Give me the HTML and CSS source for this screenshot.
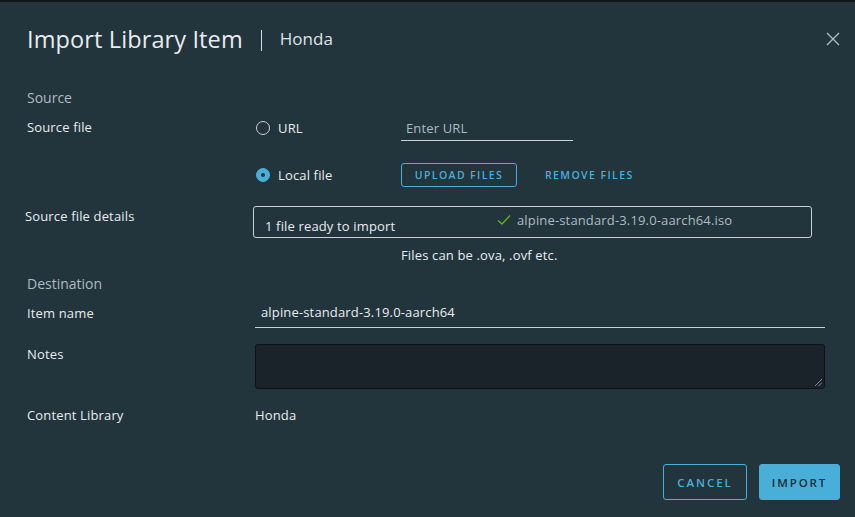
FILE: index.html
```html
<!DOCTYPE html>
<html>
<head>
<meta charset="utf-8">
<link rel="stylesheet" href="styles.css">
</head>
<body>
<div class="topstrip"></div>
<div class="dialog">
  <div class="header">
    <h1 class="title">Import Library Item</h1>
    <span class="sep"></span>
    <span class="subtitle">Honda</span>
    <svg class="close" width="14" height="14" viewBox="0 0 14 14"><path d="M1 1 L13 13 M13 1 L1 13" stroke="#adbbc4" stroke-width="1.4" fill="none"/></svg>
  </div>
  <div class="body">
    <div class="section">Source</div>
    <div class="row r-source">
      <div class="label">Source file</div>
      <div class="opts">
        <div class="opt">
          <label class="radio"><span class="circle"></span>URL</label>
          <div class="url">Enter URL</div>
        </div>
        <div class="opt opt2">
          <label class="radio"><span class="circle on"></span>Local file</label>
          <button class="btn-outline-sm">UPLOAD FILES</button>
          <button class="btn-link">REMOVE FILES</button>
        </div>
      </div>
    </div>
    <div class="row r-details">
      <div class="label l-details">Source file details</div>
      <div>
        <div class="filebox">
          <span class="ready">1 file ready to import</span>
          <span class="fname"><svg width="14" height="12" viewBox="0 0 14 12"><path d="M1 6.5 L5 10 L13 1.5" stroke="#5eb715" stroke-width="1.3" fill="none"/></svg>alpine-standard-3.19.0-aarch64.iso</span>
        </div>
        <div class="hint">Files can be .ova, .ovf etc.</div>
      </div>
    </div>
    <div class="section s-dest">Destination</div>
    <div class="row r-item">
      <div class="label">Item name</div>
      <div class="itemin">alpine-standard-3.19.0-aarch64</div>
    </div>
    <div class="row r-notes">
      <div class="label">Notes</div>
      <div class="notes"><svg class="grip" width="7" height="7" viewBox="0 0 7 7"><path d="M0 7 L7 0 M3.5 7 L7 3.5" stroke="#8a9aa3" stroke-width="0.9"/></svg></div>
    </div>
    <div class="row r-lib">
      <div class="label">Content Library</div>
      <div class="val">Honda</div>
    </div>
  </div>
  <div class="footer">
    <button class="btn-outline">CANCEL</button>
    <button class="btn-primary">IMPORT</button>
  </div>
</div>
</body>
</html>
```
FILE: styles.css
```css
* { box-sizing: border-box; }
html, body { margin: 0; padding: 0; }
body {
  width: 855px; height: 517px; overflow: hidden;
  background: #22343c;
  font-family: "Open Sans", "Noto Sans", sans-serif;
  color: #e9ecef;
}
.topstrip { height: 2px; background: #11181c; }
.dialog { position: relative; height: 515px; }
.header {
  display: flex; align-items: center;
  padding: 22px 15px 0 27px; height: 52px;
}
.title {
  margin: 0; font-weight: 400; font-size: 23.5px; color: #e9ecef;
  letter-spacing: 0.12px; line-height: 30px;
}
.sep { width: 1px; height: 21px; background: #d8dde0; margin: 2px 18px 0 18px; }
.subtitle { font-size: 17px; color: #dfe4e7; line-height: 30px; }
.close { margin-left: auto; margin-top: 0; }
.body { padding: 34px 30px 0 27px; }
.section { font-size: 14px; color: #adbbc4; line-height: 20px; }
.row { display: grid; grid-template-columns: 228px 1fr; font-size: 13px; letter-spacing: 0.15px; }
.label { color: #e9ecef; line-height: 18px; }
.r-source { margin-top: 10px; }
.opts { display: flex; flex-direction: column; }
.opt { display: flex; align-items: center; height: 20px; }
.opt2 { margin-top: 25px; height: 24px; }
.radio { display: flex; align-items: center; width: 146px; color: #e9ecef; }
.circle {
  width: 14px; height: 14px; border-radius: 50%; border: 1px solid #c9d1d5;
  margin: 0 8px 0 1px; display: inline-block; position: relative;
}
.circle.on { background: #49afd9; border-color: #49afd9; }
.circle.on::after {
  content: ""; position: absolute; left: 4px; top: 4px; width: 4px; height: 4px;
  border-radius: 50%; background: #22343c;
}
.url {
  width: 172px; color: #adbbc4; padding: 0 5px; line-height: 14px;
  border-bottom: 1px solid #c9d1d5; margin-top: 5px; height: 20px;
}
.btn-outline-sm {
  font-family: inherit; background: transparent; border: 1px solid #49afd9;
  color: #49afd9; border-radius: 3px; font-size: 10.5px; letter-spacing: 1.4px;
  height: 24px; width: 116px; padding: 0; font-weight: 600;
}
.btn-link {
  font-family: inherit; background: transparent; border: 0; color: #49afd9;
  font-size: 10.5px; letter-spacing: 1.4px; font-weight: 600; margin-left: 28px; padding: 0;
}
.r-details { margin-top: 19px; }
.l-details { margin-left: -2px; margin-top: 1px; }
.filebox {
  display: flex; align-items: flex-start; height: 32px; width: 559px;
  margin-left: -2px; border: 1px solid #c9d1d5; border-radius: 3px; padding: 0 11px;
}
.ready { width: 232px; line-height: 18px; margin-top: 10px; }
.fname { display: flex; align-items: center; color: #adbbc4; line-height: 18px; margin-top: 4px; }
.fname svg { margin-right: 6px; }
.hint { margin: 8px 0 0 146px; line-height: 18px; }
.s-dest { margin-top: 10px; }
.r-item { margin-top: 10px; }
.itemin {
  height: 25px; border-bottom: 1px solid #c9d1d5; padding-left: 6px; line-height: 18px;
  margin-top: -1px;
}
.r-notes { margin-top: 17px; }
.notes {
  height: 45px; background: #1a232a; border: 1px solid #0c1215; border-radius: 3px;
  position: relative; margin-top: -1px;
}
.grip { position: absolute; right: 2px; bottom: 2px; }
.r-lib { margin-top: 17px; }
.val { color: #e9ecef; line-height: 18px; }
.footer {
  position: absolute; right: 15px; bottom: 17px; display: flex; gap: 12px;
}
.btn-outline, .btn-primary {
  font-family: inherit; height: 36px; border-radius: 3px; font-size: 11.5px;
  letter-spacing: 1.9px; font-weight: 600; padding: 0;
}
.btn-outline { width: 84px; background: transparent; border: 1px solid #49afd9; color: #49afd9; }
.btn-primary { width: 81px; background: #49afd9; border: 1px solid #49afd9; color: #1b2a32; }
```
